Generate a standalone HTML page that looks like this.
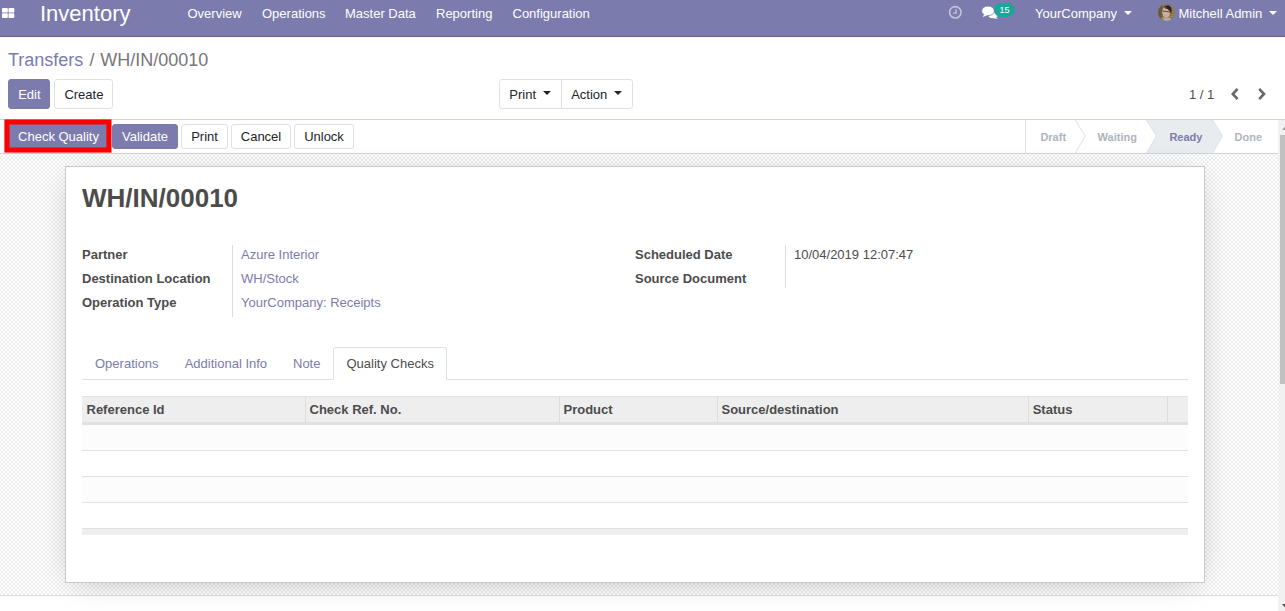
<!DOCTYPE html>
<html>
<head>
<meta charset="utf-8">
<title>WH/IN/00010 - Odoo</title>
<style>
*{box-sizing:border-box;margin:0;padding:0}
html,body{width:1285px;height:611px;overflow:hidden;background:#fff}
body{font-family:"Liberation Sans",sans-serif;font-size:13px;color:#4c4c4c;position:relative}
.abs{position:absolute;white-space:nowrap}
/* navbar */
#nav{position:absolute;left:0;top:0;width:1285px;height:37px;background:#7c7bad;border-bottom:1px solid #5f5e97}
#nav .t{position:absolute;color:#fff;white-space:nowrap;line-height:1}
/* control panel */
#cp{position:absolute;left:0;top:37px;width:1285px;height:83px;background:#fff;border-bottom:1px solid #ced4da}
.btn{position:absolute;height:30px;border-radius:3px;font-size:13px;line-height:28px;padding-top:1px;text-align:center;white-space:nowrap;border:1px solid #dee2e6;background:#fff;color:#212529}
.btn.pri{background:#7c7bad;border-color:#7c7bad;color:#fff}
.btn.sm{height:25px;line-height:23px;padding-top:0}
.caret{display:inline-block;width:0;height:0;border-left:4.2px solid transparent;border-right:4.2px solid transparent;border-top:4.4px solid currentColor;vertical-align:middle;margin-left:6.8px;margin-right:-1.2px;position:relative;top:-3px}
/* statusbar */
#sb{position:absolute;left:0;top:120px;width:1278px;height:34px;background:#fff;border-bottom:1px solid #ced4da}
/* content bg */
#bg{position:absolute;left:0;top:154px;width:1278px;height:441px;background-color:#fff;
background-image:linear-gradient(45deg,#ededed 25%,transparent 25%,transparent 75%,#ededed 75%),linear-gradient(45deg,#ededed 25%,transparent 25%,transparent 75%,#ededed 75%);background-size:4px 4px;background-position:1px -1px,3px 1px}
#sheet{position:absolute;left:65px;top:166px;width:1140px;height:417px;background:#fff;border:1px solid #c8c8d3;box-shadow:0 5px 30px -10px rgba(0,0,0,.28)}
.lbl{position:absolute;font-weight:bold;color:#4c4c4c;white-space:nowrap}
.val{position:absolute;color:#7c7bad;white-space:nowrap}
#chat{position:absolute;left:0;top:595px;width:1278px;height:16px;background:#fff;border-top:1px solid #ddd}
/* scrollbar */
#scr{position:absolute;left:1278px;top:120px;width:15px;height:494px;background:#f1f1f1}
#thumb{position:absolute;left:2px;top:15px;width:11px;height:249px;background:#c1c1c1}
</style>
</head>
<body>
<div id="nav">
  <svg class="abs" style="left:1.7px;top:8px" width="13" height="11" viewBox="0 0 13 11"><rect x="0" y="0" width="5.8" height="4.6" rx=".7" fill="#fff"/><rect x="6.5" y="0" width="5.8" height="4.6" rx=".7" fill="#fff"/><rect x="0" y="5.3" width="5.8" height="4.6" rx=".7" fill="#fff"/><rect x="6.5" y="5.3" width="5.8" height="4.6" rx=".7" fill="#fff"/></svg>
  <div class="t" style="left:40px;top:3px;font-size:22px">Inventory</div>
  <div class="t" style="left:187.5px;top:7px;font-size:13px">Overview</div>
  <div class="t" style="left:262px;top:7px;font-size:13px">Operations</div>
  <div class="t" style="left:345px;top:7px;font-size:13px">Master Data</div>
  <div class="t" style="left:436px;top:7px;font-size:13px">Reporting</div>
  <div class="t" style="left:512.5px;top:7px;font-size:13px">Configuration</div>
  <!-- clock -->
  <svg class="abs" style="left:947px;top:4px" width="16" height="16" viewBox="0 0 16 16"><circle cx="8.3" cy="8.3" r="5.7" fill="none" stroke="#c5c3df" stroke-width="1.6"/><path d="M9.1 5.2V9.1H6" fill="none" stroke="#c5c3df" stroke-width="1.4"/></svg>
  <!-- comments -->
  <svg class="abs" style="left:981px;top:5px" width="18" height="15" viewBox="0 0 18 15"><ellipse cx="12" cy="10" rx="4.6" ry="3.2" fill="#fff"/><path d="M14.5 12l2.5 2-4-.8z" fill="#fff"/><ellipse cx="7" cy="5.9" rx="6.3" ry="4.8" fill="#fff" stroke="#7c7bad" stroke-width=".8"/><path d="M3.2 9l-1.4 3 4.4-1.8z" fill="#fff"/></svg>
  <div class="abs" style="left:994px;top:3px;width:21px;height:14px;border-radius:7px;background:#21a39a;color:#fff;font-size:9px;line-height:14px;text-align:center">15</div>
  <div class="t" style="left:1035px;top:7px;font-size:13px">YourCompany</div>
  <div class="abs" style="left:1124px;top:11px;width:0;height:0;border-left:4px solid transparent;border-right:4px solid transparent;border-top:4px solid #fff"></div>
  <!-- avatar -->
  <svg class="abs" style="left:1158px;top:4px" width="17" height="17" viewBox="0 0 17 17"><defs><clipPath id="av"><circle cx="8.5" cy="8.4" r="8.5"/></clipPath></defs><g clip-path="url(#av)"><rect width="17" height="17" fill="#8c7546"/><rect x="0" y="0" width="4.500" height="17" fill="#6a5a38"/><rect x="12" y="2" width="5" height="1" fill="#9c8652"/><rect x="12" y="4.5" width="5" height="1" fill="#9c8652"/><rect x="12" y="7" width="5" height="1" fill="#9c8652"/><rect x="12" y="9.5" width="5" height="1" fill="#9c8652"/><rect x="12" y="12" width="5" height="1" fill="#9c8652"/><path d="M5.6 3.600C7 1.200 11.500 .8 13 3.400c.9 1.800.7 4.800 0 6.400L11.600 6.200C10.400 4.800 8.500 4.200 5.600 3.600z" fill="#2b2125"/><ellipse cx="8" cy="8.700" rx="3.700" ry="5.200" fill="#cfb0a4" transform="rotate(-10 8 8.700)"/><path d="M7.500 3.400c2 .2 3.600 1.200 4.600 2.800l-.5 1C10.500 5.600 9 4.800 7 4.500z" fill="#3a2c2e"/><path d="M4.6 6.6l7.2.9v.9l-7.2-.9z" fill="#5a4848"/><ellipse cx="7.6" cy="11.4" rx="1.7" ry=".8" fill="#c9a29a"/><path d="M1.5 17c.6-2.6 2.4-3.6 4-3.8 1.4 1 3.6 1 5 .2 1.8.4 3.3 1.4 4 3.600z" fill="#a9acac"/><path d="M1.5 17c.4-2.200 1.600-3.300 3-3.700l1.200 1.400-1 2.300z" fill="#b0703a"/></g></svg>
  <div class="t" style="left:1178.5px;top:7px;font-size:13px">Mitchell Admin</div>
  <div class="abs" style="left:1269px;top:11px;width:0;height:0;border-left:4px solid transparent;border-right:4px solid transparent;border-top:4px solid #fff"></div>
</div>

<div id="cp">
  <div class="abs" style="left:8px;top:13px;font-size:18px;line-height:20px;color:#777"><span style="color:#7c7bad">Transfers</span><span style="padding:0 5.7px 0 6.1px">/</span>WH/IN/00010</div>
  <div class="btn pri" style="left:8px;top:42px;width:42px;padding-left:.8px">Edit</div>
  <div class="btn" style="left:54px;top:42px;width:59px;padding-left:.8px">Create</div>
  <div class="btn" style="left:499px;top:42px;width:63px;padding-right:2px;border-radius:3px 0 0 3px">Print<span class="caret"></span></div>
  <div class="btn" style="left:561px;top:42px;width:72px;padding-right:2px;border-radius:0 3px 3px 0">Action<span class="caret"></span></div>
  <div class="abs" style="left:1189px;top:50px;font-size:13px;line-height:15px;color:#4c4c4c">1 / 1</div>
  <svg class="abs" style="left:1230px;top:51px" width="10" height="12" viewBox="0 0 10 12"><path d="M7.6 0.9L2.8 6l4.8 5.1" fill="none" stroke="#67676b" stroke-width="2.6"/></svg>
  <svg class="abs" style="left:1257px;top:51px" width="10" height="12" viewBox="0 0 10 12"><path d="M2.2 0.9L7 6l-4.8 5.1" fill="none" stroke="#67676b" stroke-width="2.6"/></svg>
</div>

<div id="sb">
  <div class="btn pri sm" style="left:8px;top:4px;width:100px;padding-left:1px">Check Quality</div>
  <div class="btn pri sm" style="left:112px;top:4px;width:66px">Validate</div>
  <div class="btn sm" style="left:181px;top:4px;width:47px">Print</div>
  <div class="btn sm" style="left:231px;top:4px;width:60px">Cancel</div>
  <div class="btn sm" style="left:294px;top:4px;width:60px">Unlock</div>
  <!-- status arrows -->
  <svg class="abs" style="left:1025px;top:0" width="253" height="33" viewBox="0 0 253 33">
    <rect x="0" y="0" width="253" height="33" fill="#fff"/>
    <path d="M121.5 0h66l10 16-10 17h-66l10-17z" fill="#e9ecef"/>
    <path d="M0.5 0v33" stroke="#dee2e6" stroke-width="1" fill="none"/>
    <path d="M50.3 0l10 16-10 17" stroke="#dee2e6" stroke-width="1" fill="none"/>
    <path d="M121.5 0l10 16-10 17" stroke="#dee2e6" stroke-width="1" fill="none"/>
    <path d="M187.5 0l10 16-10 17" stroke="#dee2e6" stroke-width="1" fill="none"/>
  </svg>
  <div class="abs" style="left:1040.4px;top:11px;font-size:11px;line-height:13px;font-weight:bold;color:#adb5bd">Draft</div>
  <div class="abs" style="left:1097.6px;top:11px;font-size:11px;line-height:13px;font-weight:bold;color:#adb5bd">Waiting</div>
  <div class="abs" style="left:1169.4px;top:11px;font-size:11px;line-height:13px;font-weight:bold;color:#7c7bad">Ready</div>
  <div class="abs" style="left:1234.6px;top:11px;font-size:11px;line-height:13px;font-weight:bold;color:#adb5bd">Done</div>
</div>
<!-- annotation rectangle -->
<svg class="abs" style="left:0;top:115px" width="120" height="42" viewBox="0 115 120 42"><rect x="6.95" y="121.95" width="102" height="28.1" fill="none" stroke="#f00" stroke-width="5.1"/></svg>

<div id="bg"></div>
<div id="chat"></div>
<div id="sheet">
  <div class="abs" style="left:16px;top:15px;font-size:26px;line-height:32px;font-weight:bold;color:#4c4c4c">WH/IN/00010</div>

  <div class="lbl" style="left:16px;top:80px">Partner</div>
  <div class="lbl" style="left:16px;top:104px">Destination Location</div>
  <div class="lbl" style="left:16px;top:128px">Operation Type</div>
  <div class="abs" style="left:166px;top:78px;width:1px;height:72px;background:#ddd"></div>
  <div class="val" style="left:175px;top:80px">Azure Interior</div>
  <div class="val" style="left:175px;top:104px">WH/Stock</div>
  <div class="val" style="left:175px;top:128px">YourCompany: Receipts</div>

  <div class="lbl" style="left:569px;top:80px">Scheduled Date</div>
  <div class="lbl" style="left:569px;top:104px">Source Document</div>
  <div class="abs" style="left:719px;top:78px;width:1px;height:43px;background:#ddd"></div>
  <div class="val" style="left:728px;top:80px;color:#4c4c4c">10/04/2019 12:07:47</div>

  <!-- tabs -->
  <div class="abs" style="left:16px;top:212px;width:1106px;height:1px;background:#dee2e6"></div>
  <div class="val" style="left:29px;top:189px">Operations</div>
  <div class="val" style="left:118.7px;top:189px">Additional Info</div>
  <div class="val" style="left:227px;top:189px">Note</div>
  <div class="abs" style="left:267px;top:180px;width:114px;height:33px;background:#fff;border:1px solid #dee2e6;border-bottom:1px solid #fff;border-radius:3px 3px 0 0"></div>
  <div class="val" style="left:280.5px;top:189px;color:#4c4c4c">Quality Checks</div>

  <!-- table -->
  <div class="abs" style="left:16px;top:229px;width:1106px;height:139px;background:#fff">
    <div class="abs" style="left:0;top:0;width:1106px;height:26px;background:#eee;border-top:1px solid #dee2e6"></div>
    <div class="abs" style="left:0;top:26px;width:1106px;height:3px;background:#dee2e6"></div>
    <div class="abs" style="left:0;top:29px;width:1106px;height:25px;background:#fcfcfc"></div>
    <div class="abs" style="left:0;top:54px;width:1106px;height:1px;background:#dee2e6"></div>
    <div class="abs" style="left:0;top:80px;width:1106px;height:1px;background:#dee2e6"></div>
    <div class="abs" style="left:0;top:81px;width:1106px;height:25px;background:#fcfcfc"></div>
    <div class="abs" style="left:0;top:106px;width:1106px;height:1px;background:#dee2e6"></div>
    <div class="abs" style="left:0;top:132px;width:1106px;height:1px;background:#dee2e6"></div>
    <div class="abs" style="left:0;top:133px;width:1106px;height:6px;background:#eee"></div>
    <div class="abs" style="left:223px;top:1px;width:1px;height:25px;background:#ddd"></div>
    <div class="abs" style="left:477px;top:1px;width:1px;height:25px;background:#ddd"></div>
    <div class="abs" style="left:635px;top:1px;width:1px;height:25px;background:#ddd"></div>
    <div class="abs" style="left:946px;top:1px;width:1px;height:25px;background:#ddd"></div>
    <div class="abs" style="left:1085px;top:1px;width:1px;height:25px;background:#ddd"></div>
    <div class="lbl" style="left:4.5px;top:6px">Reference Id</div>
    <div class="lbl" style="left:227.5px;top:6px">Check Ref. No.</div>
    <div class="lbl" style="left:481.5px;top:6px">Product</div>
    <div class="lbl" style="left:639.5px;top:6px">Source/destination</div>
    <div class="lbl" style="left:950.7px;top:6px">Status</div>
  </div>
</div>

<div id="scr">
  <div id="thumb"></div>
  <svg class="abs" style="left:0;top:0" width="15" height="15" viewBox="0 0 15 15"><path d="M4 10h7L7.5 6z" fill="#a3a3a3"/></svg>
  <svg class="abs" style="left:0;top:479px" width="15" height="15" viewBox="0 0 15 15"><path d="M4 5h7L7.5 9z" fill="#505050"/></svg>
</div>
</body>
</html>
